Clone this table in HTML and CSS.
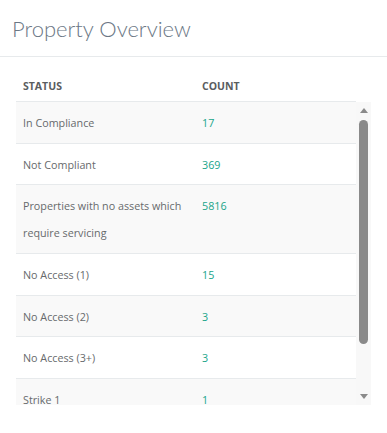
FILE: index.html
```html
<!DOCTYPE html>
<html>
<head>
<meta charset="utf-8">
<link rel="stylesheet" href="styles.css">
</head>
<body>
<div class="panel">
  <div class="panel-head">
    <h1 class="title">Property Overview</h1>
  </div>
  <div class="panel-body">
    <div class="thead">
      <div class="row head-row">
        <div class="cell c1">STATUS</div>
        <div class="cell c2">COUNT</div>
      </div>
      <div class="gutter"></div>
    </div>
    <div class="tbody-wrap">
      <div class="tbody">
        <div class="row odd"><div class="cell c1">In Compliance</div><div class="cell c2 num">17</div></div>
        <div class="row"><div class="cell c1">Not Compliant</div><div class="cell c2 num">369</div></div>
        <div class="row odd"><div class="cell c1">Properties with no assets which require servicing</div><div class="cell c2 num">5816</div></div>
        <div class="row"><div class="cell c1">No Access (1)</div><div class="cell c2 num">15</div></div>
        <div class="row odd"><div class="cell c1">No Access (2)</div><div class="cell c2 num">3</div></div>
        <div class="row"><div class="cell c1">No Access (3+)</div><div class="cell c2 num">3</div></div>
        <div class="row odd"><div class="cell c1">Strike 1</div><div class="cell c2 num">1</div></div>
      </div>
      <div class="scrollbar">
        <div class="arrow up"></div>
        <div class="thumb"></div>
        <div class="spacer"></div>
        <div class="arrow down"></div>
      </div>
    </div>
  </div>
</div>
</body>
</html>
```

FILE: styles.css
```css
html, body {
  margin: 0;
  padding: 0;
  background: #ffffff;
}
body {
  font-family: "Open Sans", "Liberation Sans", sans-serif;
  color: #676a6c;
  width: 387px;
  height: 433px;
  overflow: hidden;
}
.panel-head {
  height: 57px;
  border-bottom: 1px solid #e7eaec;
  box-sizing: border-box;
  padding: 14px 0 0 12px;
}
.title {
  margin: 0;
  font-family: "Lato", "Open Sans", sans-serif;
  font-weight: 300;
  font-size: 22px;
  line-height: 30px;
  color: #6b7785;
}
.panel-body {
  padding: 15px 16px 0 16px;
}
.thead {
  display: flex;
}
.thead .head-row {
  flex: 1;
  border-bottom: 1px solid #e7eaec;
  height: 30px;
  box-sizing: border-box;
  align-items: center;
}
.gutter {
  width: 15px;
}
.row {
  display: flex;
  border-bottom: 1px solid #e7eaec;
}
.row.odd {
  background: #f9f9f9;
}
.cell {
  padding: 8px 7px 6px 7px;
  font-size: 10.75px;
  line-height: 26.7px;
  box-sizing: border-box;
}
.head-row .cell {
  font-weight: 700;
  font-size: 10.5px;
  color: #5a5d60;
  padding-top: 0;
  padding-bottom: 0;
}
.c1 {
  width: 179px;
}
.c2 {
  flex: 1;
}
.num {
  color: #1aa58a;
}
.tbody-wrap {
  display: flex;
  height: 303px;
  overflow: hidden;
}
.tbody {
  flex: 1;
  overflow: hidden;
}
.scrollbar {
  width: 15px;
  background: #f8f8f8;
  display: flex;
  flex-direction: column;
  align-items: center;
}
.arrow {
  width: 0;
  height: 0;
  border-left: 4px solid transparent;
  border-right: 4px solid transparent;
}
.arrow.up {
  margin-top: 6px;
  border-bottom: 5px solid #8a8a8a;
}
.arrow.down {
  margin-bottom: 6px;
  border-top: 5px solid #8a8a8a;
}
.thumb {
  margin-top: 7px;
  width: 9px;
  height: 224px;
  border-radius: 5px;
  background: #8a8a8a;
}
.spacer {
  flex: 1;
}
```
